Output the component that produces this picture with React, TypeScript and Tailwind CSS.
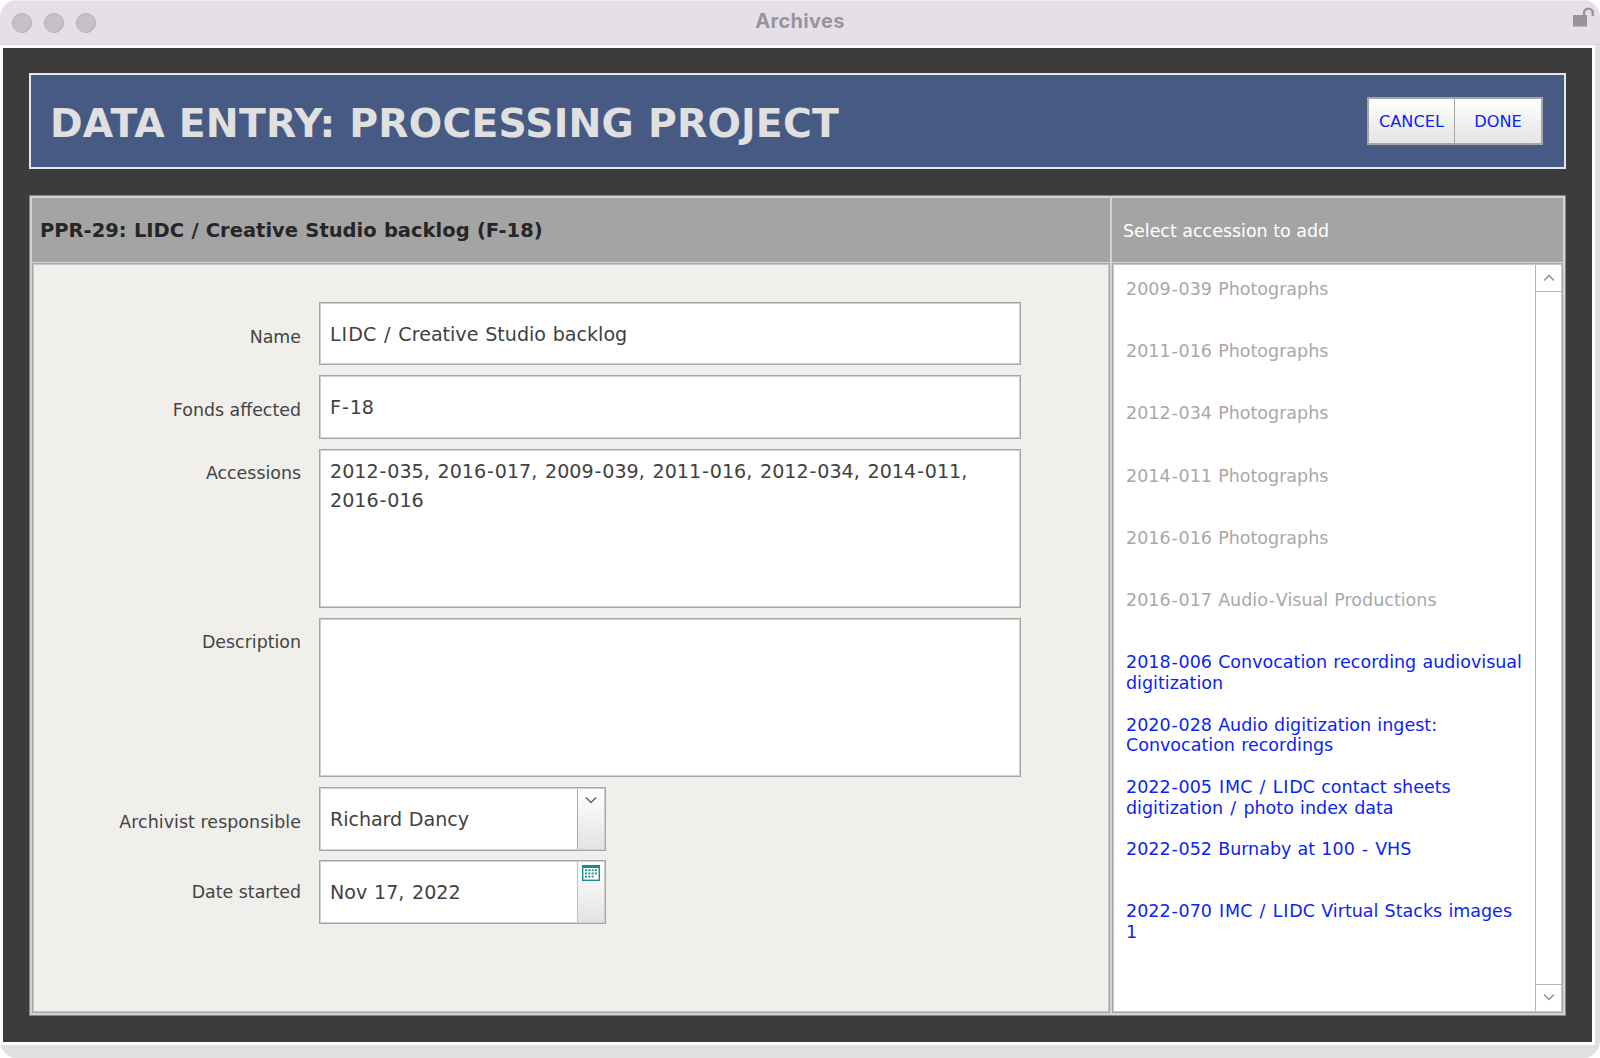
import type { ReactNode } from "react";

const accessions = [
  { text: "2009-039 Photographs", added: true },
  { text: "2011-016 Photographs", added: true },
  { text: "2012-034 Photographs", added: true },
  { text: "2014-011 Photographs", added: true },
  { text: "2016-016 Photographs", added: true },
  { text: "2016-017 Audio-Visual Productions", added: true },
  { text: "2018-006 Convocation recording audiovisual\ndigitization" },
  { text: "2020-028 Audio digitization ingest:\nConvocation recordings" },
  { text: "2022-005 IMC / LIDC contact sheets\ndigitization / photo index data" },
  { text: "2022-052 Burnaby at 100 - VHS" },
  { text: "2022-070 IMC / LIDC Virtual Stacks images\n1" },
];

/** Lines of text in which hyphens, commas, slashes, capital I and spaces get extra advance. */
function Wide({ children }: { children: string }) {
  return (
    <div className="whitespace-pre [word-spacing:0.036em]">
      {children.split("\n").map((line, n) => (
        <div key={n}>
          {line.split(/([-,/I])/).map((part, i) =>
            part === "-" ? <span key={i} className="px-[0.048em]">-</span>
            : part === "," ? <span key={i} className="pr-[0.048em]">,</span>
            : part === "/" ? <span key={i} className="px-[0.058em]">/</span>
            : part === "I" ? <span key={i} className="px-[0.05em]">I</span>
            : part,
          )}
        </div>
      ))}
    </div>
  );
}

function Row({ label, labelClass, height, children }: { label: string; labelClass: string; height: string; children: ReactNode }) {
  return (
    <div className={`flex ${height}`}>
      <div className={`w-[286px] shrink-0 pr-[18px] text-right text-[17.4px] leading-[22px] whitespace-nowrap text-[#444] ${labelClass}`}>{label}</div>
      {children}
    </div>
  );
}

const field = "border border-[#a6a6a6] bg-white pl-[10px] text-[19.1px] leading-[28.5px] text-[#414141] inset-shadow-[0_0_0_1px_#cfcfcf]";

function Chevron({ up, color }: { up?: boolean; color: string }) {
  return (
    <svg width="12" height="8" viewBox="0 0 12 8" fill="none" stroke={color} strokeWidth="1.5">
      <path d={up ? "M1 6.5 6 1.5 11 6.5" : "M1 1.5 6 6.5 11 1.5"} />
    </svg>
  );
}

function CalendarIcon() {
  return (
    <svg width="18" height="16" viewBox="0 0 18 16">
      <rect width="18" height="16" fill="#1b8a8c" />
      <rect x="1.4" y="3" width="15.2" height="11.6" fill="#fff" />
      <g fill="#1b8a8c">
        {[4.3, 7.5, 10.7].map((y) =>
          [3, 6.3, 9.6, 12.9].filter((x) => !(y > 10 && x > 12)).map((x) => <rect key={`${x}-${y}`} x={x} y={y} width="2" height="1.8" />),
        )}
      </g>
    </svg>
  );
}

export default function App() {
  return (
    <div className="h-[1058px] w-[1600px] overflow-hidden bg-white font-['DejaVu_Sans',sans-serif]">
      <div className="flex h-full flex-col overflow-hidden rounded-[17px] bg-white">
        <header className="relative flex h-[45px] shrink-0 items-center border-t border-b border-t-[#efedf0] border-b-[#dad6dc] bg-[#e5e0e7] pl-[12px]">
          <div className="flex gap-[12px]">
            <span className="size-5 rounded-full border border-[#b3aeb6] bg-[#c6c1c9]" />
            <span className="size-5 rounded-full border border-[#b3aeb6] bg-[#c6c1c9]" />
            <span className="size-5 rounded-full border border-[#b3aeb6] bg-[#c6c1c9]" />
          </div>
          <h1 className="absolute inset-x-0 top-[7px] text-center font-['Inter',sans-serif] text-[20px] leading-[26px] font-bold tracking-[0.3px] text-[#98949b]">Archives</h1>
          <svg className="absolute top-[6px] right-[6px]" width="21" height="20" viewBox="0 0 21 20">
            <rect x="0" y="8" width="14" height="11.5" fill="#969497" />
            <path d="M11 9V6a4.4 4.4 0 0 1 8.8 0v3" fill="none" stroke="#969497" strokeWidth="2.4" />
          </svg>
        </header>

        <div className="flex h-[1000px] shrink-0">
          <main className="mt-[3px] ml-[3px] flex h-[994px] w-[1589px] flex-col bg-[#3c3c3c] px-[26px] pt-[25px]">
            <section className="flex h-[96px] w-[1537px] shrink-0 items-center justify-between border-2 border-[#e4e7ea] bg-[#475a84] pr-[21px] pl-[19px]">
              <h2 className="pt-[5px] text-[39.3px] leading-[50px] font-bold tracking-[0.2px] whitespace-nowrap text-[#e0e0e0]">DATA ENTRY: PROCESSING PROJECT</h2>
              <div className="flex h-[48px] w-[176px] border-2 border-[#a5a5a5] text-[16.2px] text-[#0a24f5]">
                <button className="flex w-[86px] items-center justify-center border-r border-[#a5a5a5] bg-gradient-to-b from-white to-[#e4e4e4] pt-[3px]">CANCEL</button>
                <button className="flex flex-1 items-center justify-center bg-gradient-to-b from-white to-[#e4e4e4] pt-[3px]">DONE</button>
              </div>
            </section>

            <section className="mt-[26px] flex h-[821px] w-[1537px] shrink-0 flex-col border border-[#858585] bg-[#d3d3d3] p-[2px]">
              <div className="flex h-[64px] shrink-0 gap-[2px]">
                <h3 className="flex w-[1078px] items-center bg-[#a4a4a4] pt-[2px] pl-[8px] text-[19.5px] font-bold whitespace-nowrap text-[#262626] [word-spacing:0.5px]">PPR-29: LIDC / Creative Studio backlog (F-18)</h3>
                <div className="flex flex-1 items-center bg-[#a4a4a4] pt-[2px] pl-[11px] text-[17.45px] text-white">Select accession to add</div>
              </div>
              <div className="mt-px flex min-h-0 flex-1 gap-[2px]">
                <form className="flex w-[1078px] flex-col border border-[#a6a6a6] bg-[#f0efeb] pt-[38px] inset-shadow-[0_0_0_1px_#c6c6c4]">
                  <Row label="Name" labelClass="pt-[24px]" height="h-[63px]">
                    <div className={`${field} flex w-[702px] items-center pt-[3px]`}><Wide>LIDC / Creative Studio backlog</Wide></div>
                  </Row>
                  <div className="h-[10px] shrink-0" />
                  <Row label="Fonds affected" labelClass="pt-[24px]" height="h-[64px]">
                    <div className={`${field} flex w-[702px] items-center pt-[2px]`}><Wide>F-18</Wide></div>
                  </Row>
                  <div className="h-[10px] shrink-0" />
                  <Row label="Accessions" labelClass="pt-[13px]" height="h-[159px]">
                    <div className={`${field} w-[702px] pt-[8px]`}><Wide>{"2012-035, 2016-017, 2009-039, 2011-016, 2012-034, 2014-011,\n2016-016"}</Wide></div>
                  </Row>
                  <div className="h-[10px] shrink-0" />
                  <Row label="Description" labelClass="pt-[13px]" height="h-[159px]">
                    <div className={`${field} w-[702px]`} />
                  </Row>
                  <div className="h-[10px] shrink-0" />
                  <Row label="Archivist responsible" labelClass="pt-[24px] tracking-[0.07px]" height="h-[64px]">
                    <div className={`${field} flex w-[287px] items-stretch py-px pr-px`}>
                      <span className="flex flex-1 items-center pt-[2px] tracking-[-0.05px]"><Wide>Richard Dancy</Wide></span>
                      <span className="flex w-[27px] justify-center border-l border-[#a8a8a8] bg-gradient-to-b from-white to-[#e3e3e3] pt-[7px]"><Chevron color="#666" /></span>
                    </div>
                  </Row>
                  <div className="h-[9px] shrink-0" />
                  <Row label="Date started" labelClass="pt-[21px]" height="h-[64px]">
                    <div className={`${field} flex w-[287px] items-stretch py-px pr-px`}>
                      <span className="flex flex-1 items-center pt-[2px]"><Wide>Nov 17, 2022</Wide></span>
                      <span className="flex w-[27px] justify-center border-l border-[#c0c0c0] bg-gradient-to-b from-white to-[#e3e3e3] pt-[3px]"><CalendarIcon /></span>
                    </div>
                  </Row>
                </form>

                <aside className="flex flex-1 border border-[#a6a6a6] bg-white py-px pl-px inset-shadow-[0_0_0_1px_#c6c6c6]">
                  <ul className="flex-1 pt-[14px] pl-[12px] text-[17.5px] leading-[20.8px]">
                    {accessions.map((a) => (
                      <li key={a.text} className={`h-[62.24px] ${a.added ? "text-[#a8a8a8]" : "text-[#0a24f5]"}`}><Wide>{a.text}</Wide></li>
                    ))}
                  </ul>
                  <div className="flex w-[27px] flex-col justify-between border-l border-[#a9bac6]">
                    <span className="flex h-[27px] items-center justify-center border-b border-[#a9bac6]"><Chevron up color="#8095a4" /></span>
                    <span className="flex h-[27px] items-center justify-center border-t border-[#a9bac6] pb-[2px]"><Chevron color="#8095a4" /></span>
                  </div>
                </aside>
              </div>
            </section>
          </main>
          <div className="w-[3px] bg-white" />
          <div className="flex-1 bg-[#e0e0e0]" />
        </div>
        <footer className="ml-px flex-1 bg-[#e0e0e0]" />
      </div>
    </div>
  );
}
